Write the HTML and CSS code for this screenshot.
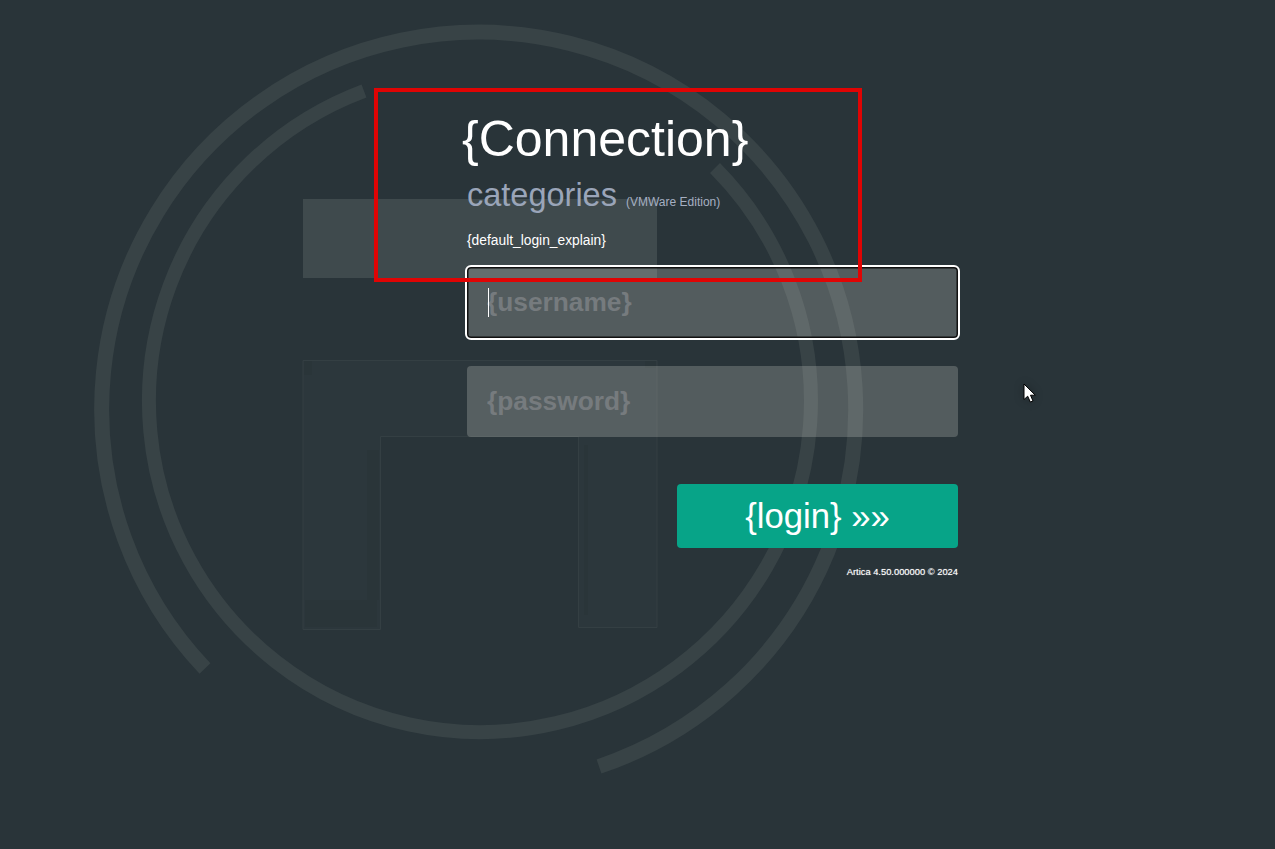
FILE: index.html
```html
<!DOCTYPE html>
<html lang="en">
<head>
    <meta charset="UTF-8">
    <meta name="viewport" content="width=device-width, initial-scale=1.0">
    <title>Artica - Connection</title>
    <link rel="stylesheet" href="styles.css">
</head>
<body>

<svg class="backdrop" width="1275" height="849" viewBox="0 0 1275 849" aria-hidden="true">
    <path class="ring outer" d="M205 668.500 A377 377 0 1 1 599 766.500"/>
    <path class="ring inner" d="M715 168 A331 331 0 1 1 364 91"/>
    <rect class="logo-top" x="303" y="199" width="354" height="79"/>
    <path class="logo-body" d="M303 360.500 H657 V627.500 H578.500 V436.500 H380.500 V629.500 H303 Z"/>
    <rect class="logo-shade" x="367" y="450" width="12" height="150"/>
    <rect class="logo-shade" x="304" y="361" width="8" height="14"/>
    <rect class="logo-shade" x="305" y="600" width="72" height="27"/>
    <rect class="logo-shade" x="584" y="445" width="4" height="170"/>
    <rect class="logo-shade" x="645" y="361" width="11" height="7"/>
</svg>

<main class="login">
    <h1>{Connection}</h1>
    <div class="product">categories <small>(VMWare Edition)</small></div>
    <p class="explain">{default_login_explain}</p>

    <form class="login-form" onsubmit="return false">
        <div class="field">
            <input class="focused" type="text" placeholder="{username}" aria-label="username">
            <span class="caret"></span>
        </div>
        <div class="field">
            <input type="password" placeholder="{password}" aria-label="password">
        </div>
        <div class="actions">
            <button type="submit">{login} »»</button>
        </div>
    </form>

    <div class="copyright">Artica 4.50.000000 © 2024</div>
</main>

<div class="highlight"></div>

<svg class="pointer" width="15" height="21" viewBox="0 0 15 21" aria-hidden="true">
    <path d="M1 1 V16.500 L4.700 13.200 L7.300 19 L10 18 L7.500 12.200 H12.300 Z"/>
</svg>

</body>
</html>
```

FILE: styles.css
```css
* {
    margin: 0;
    padding: 0;
    box-sizing: border-box;
}
html, body {
    height: 100%;
}
body {
    font-family: "Liberation Sans", Arial, sans-serif;
    background-color: #293439;
    color: #fff;
    overflow: hidden;
    position: relative;
}
.backdrop {
    position: absolute;
    top: 0;
    left: 0;
}
.ring {
    fill: none;
    stroke: #384346;
}
.ring.outer {
    stroke-width: 15;
}
.ring.inner {
    stroke-width: 14;
}
.logo-top {
    fill: #3f4a4d;
}
.logo-body {
    fill: #2c373c;
    stroke: #343f43;
    stroke-width: 1;
}
.logo-shade {
    fill: #2a3539;
}
.login {
    position: relative;
    width: 491px;
    margin-left: 467px;
    padding-top: 109px;
}
h1 {
    font-size: 50px;
    font-weight: normal;
    line-height: 60px;
    margin-left: -5px;
}
.product {
    font-size: 32.500px;
    line-height: 40px;
    margin-top: 6px;
    color: #9aa5b9;
}
.product small {
    font-size: 12px;
    color: #a5afc2;
}
.explain {
    font-size: 13.800px;
    line-height: 18px;
    margin-top: 10px;
}
.login-form {
    margin-top: 17px;
}
.field {
    position: relative;
    margin-bottom: 28px;
}
input {
    display: block;
    width: 100%;
    height: 71px;
    padding: 0 20px;
    border: none;
    border-radius: 4px;
    background-color: rgba(255, 255, 245, 0.2);
    color: #fff;
    font-family: inherit;
    font-size: 26.300px;
    font-weight: bold;
}
input::placeholder {
    color: #767b7e;
    opacity: 1;
}
input.focused {
    outline: 2px solid #fff;
    outline-offset: 0;
    box-shadow: inset 0 0 0 1.500px #111;
}
.caret {
    position: absolute;
    left: 21px;
    top: 21px;
    width: 1px;
    height: 29px;
    background-color: #fff;
}
.actions {
    display: flex;
    justify-content: flex-end;
    margin-top: 47px;
}
button {
    width: 281px;
    height: 64px;
    border: none;
    border-radius: 4px;
    background-color: #07a488;
    color: #fff;
    font-family: inherit;
    font-size: 34.700px;
    cursor: pointer;
}
.copyright {
    margin-top: 18px;
    text-align: right;
    font-size: 9.350px;
    line-height: 12px;
    text-shadow: 0 0 1px rgba(255, 255, 255, 0.6);
}
.highlight {
    position: absolute;
    left: 374px;
    top: 88px;
    width: 488px;
    height: 194px;
    border: 4px solid #e00404;
}
.pointer {
    position: absolute;
    left: 1023px;
    top: 383px;
    filter: drop-shadow(0 0 4px rgba(0, 0, 0, 0.25));
}
.pointer path {
    fill: #fff;
    stroke: #000;
    stroke-width: 1;
}
```
